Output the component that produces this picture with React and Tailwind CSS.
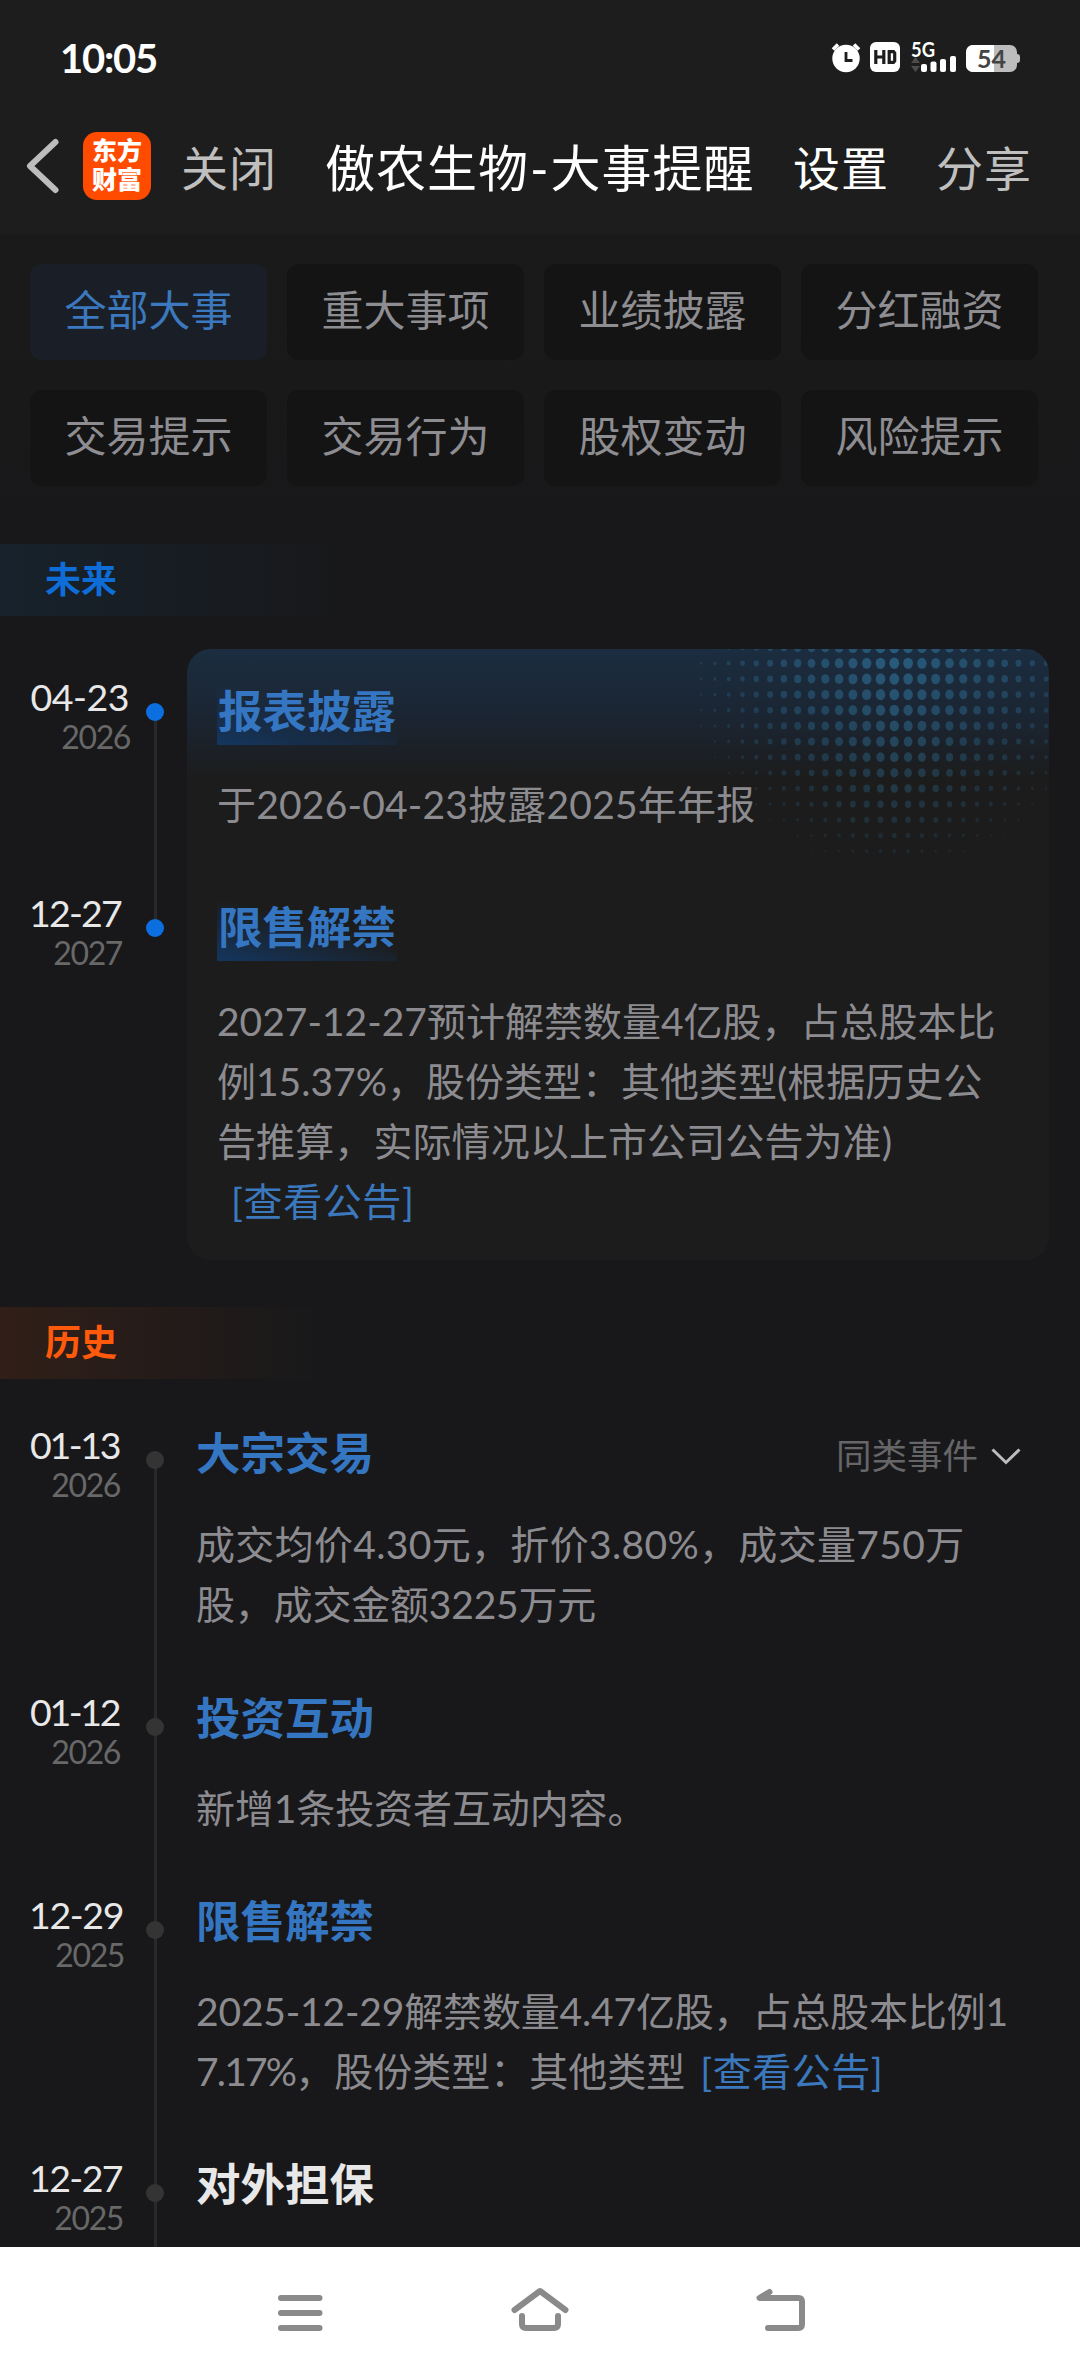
import React from "react";

const filters = [
  "全部大事", "重大事项", "业绩披露", "分红融资",
  "交易提示", "交易行为", "股权变动", "风险提示",
];

function StatusIcons() {
  return (
    <svg className="w-[190px] h-[40px] overflow-visible" viewBox="830 39 190 40">
      <g fill="#fff">
        <circle cx="846" cy="59.500" r="13.700" />
        <path d="M833 50.500l5-5M859 50.500l-5-5" stroke="#fff" strokeWidth="3.600" />
        <path d="M846 53v8.500h6.500" stroke="#1d1d1d" strokeWidth="2.800" fill="none" />
        <rect x="870" y="43" width="30" height="30" rx="6" />
        <path d="M875.800 51v14M883.800 51v14M875.500 58h8M889.200 52.600h4.300l1.200 1.400v8l-1.200 1.400h-4.300z" stroke="#1d1d1d" strokeWidth="3.200" fill="none" />
        <rect x="921" y="65" width="6" height="8" rx="2" />
        <rect x="930.500" y="62.500" width="6" height="10.500" rx="2" />
        <rect x="940" y="60" width="6" height="13" rx="2" />
        <rect x="950" y="57" width="6" height="16" rx="2" />
      </g>
      <path d="M911 64l4.500-6 4.500 6zM911 67l4.500 6 4.500-6z" fill="#4c4c4c" />
      <text x="911" y="57.500" fontSize="20" fontWeight="700" textLength="24" lengthAdjust="spacingAndGlyphs" fill="#fff" className="font-['Lato',sans-serif]">5G</text>
      <rect x="966" y="46" width="51" height="27" rx="7" fill="#bdbdbd" />
      <rect x="1013" y="55" width="7" height="9" rx="3" fill="#bdbdbd" />
      <path d="M994 46h-21a7 7 0 0 0-7 7v13a7 7 0 0 0 7 7h21z" fill="#fff" />
      <text x="977" y="68.500" fontSize="25" fontWeight="700" textLength="29" fill="#444" className="font-['Lato',sans-serif]">54</text>
    </svg>
  );
}

// Halftone pattern in the top right corner of the upcoming events card.
function Halftone() {
  const dots = [];
  for (let row = -1; row <= 12; row++) {
    for (let col = -14; col <= 11; col++) {
      const dx = Math.abs(col) / 15.5;
      const dy = Math.max(row, 0) / 14;
      const size = 1 - Math.pow(dx, 1.5) - Math.pow(dy, 2.2);
      if (size <= 0.04) continue;
      const opacity = 0.74 * (1 - dx * 0.68) * (1 - dy * 0.88);
      dots.push(
        <ellipse
          key={row + "," + col}
          cx={217.3 + col * 13.8}
          cy={14.3 + row * 15.65}
          rx={0.6 + 4.3 * size}
          ry={0.7 + 5 * size}
          opacity={opacity}
        />
      );
    }
  }
  return (
    <svg className="absolute top-0 right-0 w-[372px] h-[220px]" viewBox="0 0 372 220" fill="#2d6b90">
      {dots}
    </svg>
  );
}

function DateLabel({ date, year, width, track }) {
  return (
    <div className={"flex flex-col items-end whitespace-nowrap " + width}>
      <div className={"h-[44px] text-[37.5px] leading-[44px] text-[#e8e8e8] " + track}>{date}</div>
      <div className="-mr-[1px] h-[34px] text-[32px] leading-[36px] text-[#686868] tracking-[-1.4px]">{year}</div>
    </div>
  );
}

function Rail({ blue, line }) {
  return (
    <div className="relative w-[18px] shrink-0 self-stretch">
      <div className={"absolute left-[8px] w-[3px] bg-[#29292a] " + line} />
      <div className={"absolute left-0 top-[28px] size-[18px] rounded-full " + (blue ? "bg-[#0b6fdf]" : "bg-[#343434]")} />
    </div>
  );
}

function HistoryItem({ height, line, date, year, width, track, title, white, similar, children }) {
  return (
    <div className={"flex " + height}>
      <div className="w-[116px] shrink-0">
        <DateLabel date={date} year={year} width={width} track={track} />
      </div>
      <Rail line={line} />
      <div className="ml-[32px] flex-1">
        <div className={"flex items-start justify-between pr-[59px] h-[60px] " + (similar ? "mb-[31px]" : "-mt-[2px] mb-[30px]")}>
          <div className={"text-[44.5px] leading-[60px] font-bold whitespace-nowrap " + (white ? "text-[#e8e8e8]" : "text-[#3576c2]")}>{title}</div>
          {similar && (
            <div className="mt-[3px] flex items-center gap-[13px] text-[35.5px] leading-[60px] text-[#666668]">
              同类事件
              <svg className="w-[30px] h-[17px]" viewBox="0 0 30 17" fill="none" stroke="#bcbcbc" strokeWidth="3">
                <path d="M1.500 1.500l13.500 13 13.500-13" />
              </svg>
            </div>
          )}
        </div>
        <div className="text-[39px] leading-[60px] text-[#8c8b90] whitespace-nowrap">{children}</div>
      </div>
    </div>
  );
}

function FutureTitle({ children }) {
  return (
    <div className="w-[180px] h-[60px] pl-[1px] bg-[linear-gradient(15deg,#14365f_0%,#14365f00_60%)] text-[44.5px] leading-[51px] font-bold text-[#3576c2] whitespace-nowrap">
      {children}
    </div>
  );
}

export default function App() {
  return (
    <div className="flex flex-col w-[1080px] h-[2376px] overflow-hidden bg-[#18181a] font-['Lato','Noto_Sans_CJK_SC',sans-serif]">
      <header className="h-[234px] shrink-0 bg-[#1d1d1d]">
        <div className="flex items-center justify-between h-[116px] pl-[60px] pr-[60px]">
          <div className="text-[40px] leading-[40px] font-bold text-white tracking-[-1.2px]">10:05</div>
          <StatusIcons />
        </div>
        <div className="flex items-center h-[100px] text-[47px] tracking-[1px] leading-[60px] whitespace-nowrap text-[#bfbfbf]">
          <svg className="ml-[25px] w-[36px] h-[60px]" viewBox="0 0 36 60" fill="none" stroke="#bdbdbd" strokeWidth="6" strokeLinecap="round" strokeLinejoin="round">
            <path d="M30.500 6L5 30l25.500 24" />
          </svg>
          <div className="ml-[22px] w-[68px] h-[68px] rounded-[14px] bg-[#ff4b00] text-white font-black text-[25px] tracking-normal leading-[29px] text-center pt-[4px]">
            东方<br />财富
          </div>
          <div className="ml-[30px] pt-1 w-[97px]">关闭</div>
          <div className="ml-[47px] pt-1 w-[429px] text-[50px] text-white">
            傲农生物<span className="px-[1px]">-</span>大事提醒
          </div>
          <div className="ml-[39px] pt-1 w-[97px] text-white">设置</div>
          <div className="ml-[46px] pt-1 w-[97px]">分享</div>
        </div>
      </header>

      <div className="grid grid-cols-4 content-start gap-x-[20px] gap-y-[30px] pt-[30px] pl-[30px] pr-[42px] h-[310px] shrink-0 bg-[linear-gradient(180deg,#1a1a1a,#18181a)]">
        {filters.map((name, i) => (
          <div
            key={name}
            className={
              "h-[96px] rounded-[12px] text-center text-[42px] leading-[92px] whitespace-nowrap " +
              (i === 0 ? "bg-[#1a1f27] text-[#3b78bd]" : "bg-[#141414] text-[#8e8d92]")
            }
          >
            {name}
          </div>
        ))}
      </div>

      <div className="h-[72px] shrink-0 pl-[45px] bg-[linear-gradient(90deg,#17222c_0px,#18181a_340px)] text-[36px] leading-[70px] font-bold text-[#0f6dd8]">未来</div>

      <section className="flex h-[691px] shrink-0 pt-[33px]">
        <div className="flex w-[187px] pt-[26px]">
          <div>
            <div className="flex h-[216px]">
              <div className="w-[146px] shrink-0">
                <DateLabel date="04-23" year="2026" width="w-[129px]" track="tracking-[-0.5px]" />
              </div>
              <Rail blue line="top-[37px] h-[216px]" />
            </div>
            <div className="flex h-[80px]">
              <div className="w-[146px] shrink-0">
                <DateLabel date="12-27" year="2027" width="w-[121px]" track="tracking-[-1.8px]" />
              </div>
              <Rail blue line="top-0 h-[30px]" />
            </div>
          </div>
        </div>
        <div className="relative w-[862px] h-[611px] rounded-[24px] overflow-hidden pl-[30px] pt-[36px] bg-[linear-gradient(180deg,#1b2d40_0px,#1b2532_70px,#1c1c1c_130px)]">
          <Halftone />
          <div className="relative text-[39px] leading-[60px] text-[#8c8b90] whitespace-nowrap">
            <FutureTitle>报表披露</FutureTitle>
            <div className="mt-[29px] tracking-[0.2px]">于2026-04-23披露2025年年报</div>
            <div className="mt-[67px]"><FutureTitle>限售解禁</FutureTitle></div>
            <div className="mt-[30px]">2027-12-27预计解禁数量4亿股，占总股本比</div>
            <div>例15.37%，股份类型：其他类型(根据历史公</div>
            <div className="tracking-[0.1px]">告推算，实际情况以上市公司公告为准)</div>
            <div className="pl-[14px] text-[#3b78bd] tracking-[0.6px]">[查看公告]</div>
          </div>
        </div>
      </section>

      <div className="h-[72px] shrink-0 pl-[45px] bg-[linear-gradient(90deg,#311f18_0px,#18181a_320px)] text-[36px] leading-[70px] font-bold text-[#ff5a0c]">历史</div>

      <section className="h-[868px] shrink-0 overflow-hidden pl-[30px] pt-[44px]">
        <HistoryItem height="h-[267px]" line="top-[37px] bottom-0" date="01-13" year="2026" width="w-[89px]" track="tracking-[-2.4px]" title="大宗交易" similar>
          <span className="tracking-[0.33px]">成交均价4.30元，折价3.80%，成交量750万</span>
          <br />
          <span className="tracking-[-0.2px]">股，成交金额3225万元</span>
        </HistoryItem>
        <HistoryItem height="h-[203px]" line="top-0 bottom-0" date="01-12" year="2026" width="w-[89px]" track="tracking-[-2.4px]" title="投资互动">
          <span className="tracking-[-0.1px]">新增1条投资者互动内容。</span>
        </HistoryItem>
        <HistoryItem height="h-[263px]" line="top-0 bottom-0" date="12-29" year="2025" width="w-[93px]" track="tracking-[-1.4px]" title="限售解禁">
          <span className="tracking-[-0.17px]">2025-12-29解禁数量4.47亿股，占总股本比例1</span>
          <br />
          <span className="tracking-[-1.8px]">7.17%</span>，股份类型：其他类型 <span className="ml-[5px] tracking-[0.5px] text-[#3b78bd]">[查看公告]</span>
        </HistoryItem>
        <HistoryItem height="h-[120px]" line="top-0 bottom-0" date="12-27" year="2025" width="w-[92px]" track="tracking-[-1.6px]" title="对外担保" white />
      </section>

      <nav className="flex-1 bg-white">
        <svg className="w-[1080px] h-[129px]" viewBox="0 2247 1080 129" fill="none" stroke="#8a8a8a" strokeWidth="6" strokeLinecap="round" strokeLinejoin="round">
          <path d="M281 2298h38.500M281 2313h38.500M281 2328h38.500" />
          <path d="M514.500 2310L540 2291l25.500 19M522 2316v8q0 4 4 4h28q4 0 4-4v-8" />
          <path d="M769.500 2292l-10 6h39q3.500 0 3.500 4v22q0 4-3.500 4h-30.500" />
        </svg>
      </nav>
    </div>
  );
}
